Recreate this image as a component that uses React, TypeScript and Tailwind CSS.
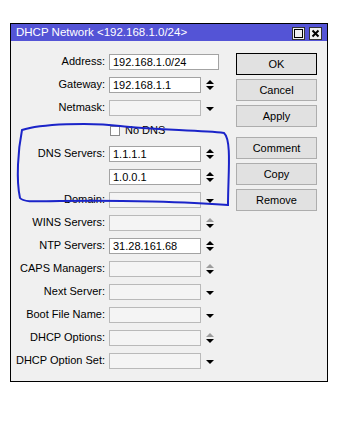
type Arrow = 'none' | 'spin' | 'spin-off' | 'drop'

interface Row {
  label: string
  value?: string
  arrow: Arrow
  wide?: boolean
}

const rowsTop: Row[] = [
  { label: 'Address:', value: '192.168.1.0/24', arrow: 'none', wide: true },
  { label: 'Gateway:', value: '192.168.1.1', arrow: 'spin' },
  { label: 'Netmask:', arrow: 'drop' },
]

const rowsDns: Row[] = [
  { label: 'DNS Servers:', value: '1.1.1.1', arrow: 'spin' },
  { label: '', value: '1.0.0.1', arrow: 'spin' },
  { label: 'Domain:', arrow: 'drop' },
  { label: 'WINS Servers:', arrow: 'spin-off' },
  { label: 'NTP Servers:', value: '31.28.161.68', arrow: 'spin' },
  { label: 'CAPS Managers:', arrow: 'spin-off' },
  { label: 'Next Server:', arrow: 'drop' },
  { label: 'Boot File Name:', arrow: 'drop' },
  { label: 'DHCP Options:', arrow: 'spin-off' },
  { label: 'DHCP Option Set:', arrow: 'drop' },
]

function ArrowIcon({ kind }: { kind: Arrow }) {
  if (kind === 'none') return null
  if (kind === 'drop') {
    return (
      <svg width="10" height="12" viewBox="0 0 10 12">
        <path d="M1 5 L9 5 L5 9 Z" fill="#000" />
      </svg>
    )
  }
  return (
    <svg width="10" height="12" viewBox="0 0 10 12">
      <path d="M1 5 L9 5 L5 1 Z" fill={kind === 'spin-off' ? '#9c9c9c' : '#000'} />
      <path d="M1 7 L9 7 L5 11 Z" fill="#000" />
    </svg>
  )
}

function FieldRow({ row }: { row: Row }) {
  return (
    <div className="flex h-[23px] items-center">
      <div className="w-[95px] pr-[1px] text-right">{row.label}</div>
      <div
        className={`ml-[3px] h-[16px] border px-[3px] leading-[14px] ${row.wide ? 'w-[110px]' : 'w-[92px]'} ${
          row.value ? 'border-[#a3a3a3] bg-white' : 'border-[#b9b9b9] bg-[#f4f4f4]'
        }`}
      >
        {row.value}
      </div>
      {!row.wide && (
        <div className="flex w-[18px] justify-center">
          <ArrowIcon kind={row.arrow} />
        </div>
      )}
    </div>
  )
}

function Btn({ label, primary }: { label: string; primary?: boolean }) {
  return (
    <div
      className={`flex h-[22px] w-[81px] items-center justify-center border bg-[#e1e1e1] ${
        primary ? 'border-black' : 'border-[#adadad]'
      }`}
    >
      {label}
    </div>
  )
}

export default function App() {
  return (
    <div className="relative h-[426px] w-[363px] bg-white font-['Liberation_Sans',Arial,sans-serif] text-[11px] text-black">
      <div className="ml-[10px] pt-[23px]">
        <div className="w-[318px] border border-black bg-[#f0f0f0]">
          {/* title bar */}
          <div className="flex h-[17px] items-center bg-[#5454d6] pl-[5px] pr-[5px] text-[11.5px] text-white">
            <span className="flex-1">DHCP Network &lt;192.168.1.0/24&gt;</span>
            <div className="mt-[2px] flex gap-[4px]">
              <div className="flex h-[13px] w-[13px] items-center justify-center border border-[#333] bg-[#f0f0f0]">
                <div className="h-[9px] w-[9px] border border-black" />
              </div>
              <div className="flex h-[13px] w-[13px] items-center justify-center border border-[#333] bg-[#f0f0f0]">
                <svg width="9" height="9" viewBox="0 0 9 9">
                  <path d="M1.5 1.5 L7.5 7.5 M7.5 1.5 L1.5 7.5" stroke="#000" strokeWidth="2" />
                </svg>
              </div>
            </div>
          </div>

          {/* body */}
          <div className="flex pb-[9px] pt-[9px]">
            <div className="flex flex-col">
              {rowsTop.map((r) => (
                <FieldRow key={r.label} row={r} />
              ))}
              <div className="flex h-[23px] items-center pl-[99px]">
                <div className="h-[10px] w-[10px] border border-[#8a8a8a] bg-white" />
                <span className="ml-[5px]">No DNS</span>
              </div>
              {rowsDns.map((r, i) => (
                <FieldRow key={i} row={r} />
              ))}
            </div>

            <div className="ml-[17px] mt-[3px] flex flex-col gap-[4px]">
              <Btn label="OK" primary />
              <Btn label="Cancel" />
              <Btn label="Apply" />
              <div className="h-[2px]" />
              <Btn label="Comment" />
              <Btn label="Copy" />
              <Btn label="Remove" />
            </div>
          </div>
        </div>
      </div>

      {/* hand-drawn highlight */}
      <svg className="pointer-events-none absolute left-0 top-0" width="363" height="426">
        <path
          d="M22 130 C40 124 90 122 120 126 C150 130 200 130 224 133 C232 140 228 175 228 205 C190 202 120 200 60 201 C40 201 24 203 20 198 C16 180 18 150 22 130 Z"
          fill="none"
          stroke="#1b24c9"
          strokeWidth="2"
        />
      </svg>
    </div>
  )
}
